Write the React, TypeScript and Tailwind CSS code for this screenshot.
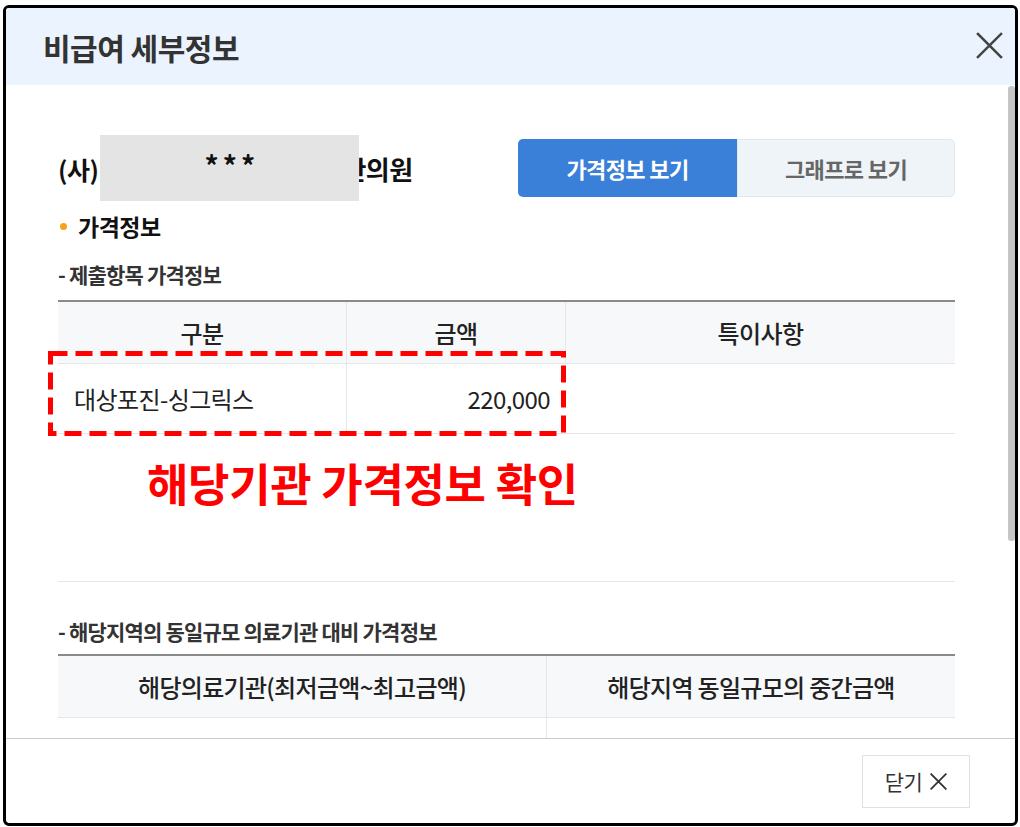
import React from "react";

const font = { fontFamily: '"Noto Sans CJK KR", "Noto Sans", sans-serif' };

function CloseIcon({ size, stroke, color }: { size: number; stroke: number; color: string }) {
  return (
    <svg width={size} height={size} viewBox="0 0 28 28" fill="none">
      <path d="M2 2 L26 26 M26 2 L2 26" stroke={color} strokeWidth={stroke} strokeLinecap="square" />
    </svg>
  );
}

export default function App() {
  return (
    <div className="relative w-[1020px] h-[827px] bg-white overflow-hidden" style={font}>
      <div className="absolute left-[3px] top-[5px] w-[1015px] h-[821px] border-[3px] border-black rounded-[6px] bg-white flex flex-col overflow-hidden">
        {/* Header */}
        <div className="h-[77px] shrink-0 bg-[#ebf3fe] flex items-center justify-between pl-[37px] pr-[12px]">
          <h1 className="text-[30px] leading-none font-bold text-[#333] tracking-[-0.5px]">비급여 세부정보</h1>
          <button className="w-[28px] h-[28px] flex items-center justify-center mt-[-2px]">
            <CloseIcon size={27} stroke={2.6} color="#444" />
          </button>
        </div>

        {/* Body */}
        <div className="relative flex-1 overflow-hidden">
          <div className="absolute right-[0px] top-[1px] w-[7px] h-[455px] rounded-[3px] bg-[#c6c6c6]" />
          <div className="pl-[52px] pr-[60px] pt-[50px]">
            {/* name row */}
            <div className="flex items-center justify-between h-[66px]">
              <div className="flex items-center">
                <span className="text-[25px] leading-none font-bold text-[#111] tracking-[-0.5px] mt-[2px]">(사)</span>
                <div className="relative z-10 ml-[2px] w-[259px] h-[66px] bg-[#e4e4e4] flex items-start justify-center pt-[16px]">
                  <span className="text-[28px] leading-none font-bold text-[#111] tracking-[4px] pl-[4px]">***</span>
                </div>
                <span className="ml-[-17px] text-[26px] leading-none font-bold text-[#111] tracking-[-0.5px] mt-[2px]">한의원</span>
              </div>
              <div className="flex w-[437px] h-[58px]">
                <button className="w-[219px] h-full bg-[#3a80d8] rounded-l-[5px] text-white text-[22px] leading-none font-bold tracking-[-0.6px]">
                  가격정보 보기
                </button>
                <button className="w-[218px] h-full bg-[#eff4f8] border border-[#e2e8ec] rounded-r-[5px] text-[#666] text-[22px] leading-none font-bold tracking-[-0.6px]">
                  그래프로 보기
                </button>
              </div>
            </div>

            {/* bullet */}
            <div className="mt-[12px] flex items-center h-[26px]">
              <span className="w-[7px] h-[7px] rounded-full bg-[#f7a21b] ml-[2px] mr-[11px]" />
              <span className="text-[23px] leading-none font-bold text-[#111] tracking-[-0.5px]">가격정보</span>
            </div>

            <div className="mt-[23px] h-[24px] flex items-center text-[21px] leading-none font-bold text-[#333] tracking-[-0.8px]">- 제출항목 가격정보</div>

            {/* table 1 */}
            <div className="relative mt-[14px]">
              <div className="border-t-2 border-[#8a8a8a]">
                <div className="grid grid-cols-[289px_219px_1fr] h-[62px] bg-[#f7f8fa] border-b border-[#e6e6e6]">
                  <div className="flex items-center justify-center text-[24px] leading-none font-medium text-[#222] border-r border-[#e6e6e6] tracking-[-0.6px]">구분</div>
                  <div className="flex items-center justify-center text-[24px] leading-none font-medium text-[#222] border-r border-[#e6e6e6] tracking-[-0.6px]">금액</div>
                  <div className="flex items-center justify-center text-[24px] leading-none font-medium text-[#222] tracking-[-0.6px]">특이사항</div>
                </div>
                <div className="grid grid-cols-[289px_219px_1fr] h-[70px] border-b border-[#e6e6e6]">
                  <div className="flex items-center pl-[16px] text-[24px] leading-none text-[#222] border-r border-[#e6e6e6] tracking-[-0.6px]">대상포진-싱그릭스</div>
                  <div className="flex items-center justify-end pr-[16px] text-[24px] leading-none text-[#222] tracking-[-0.6px]">220,000</div>
                  <div />
                </div>
              </div>
              <svg className="absolute left-[-10px] top-[51px]" width="518" height="85" viewBox="0 0 518 85" fill="none">
                <rect x="2.5" y="2.5" width="513" height="80" stroke="#ff0000" strokeWidth="5" strokeDasharray="17 8" />
              </svg>
            </div>

            <div className="mt-[25px] ml-[89px] h-[46px] flex items-center text-[45px] leading-none font-bold text-[#ff0000] tracking-[-0.3px]">
              해당기관 가격정보 확인
            </div>

            <div className="mt-[76px] h-px bg-[#e6e6e6]" />

            <div className="mt-[37px] h-[24px] flex items-center text-[21px] leading-none font-bold text-[#333] tracking-[-0.8px]">
              - 해당지역의 동일규모 의료기관 대비 가격정보
            </div>

            {/* table 2 */}
            <div className="mt-[11px] border-t-2 border-[#8a8a8a]">
              <div className="grid grid-cols-[489px_1fr] h-[62px] bg-[#f7f8fa] border-b border-[#e6e6e6]">
                <div className="flex items-center justify-center text-[24px] leading-none font-medium text-[#222] border-r border-[#e6e6e6] tracking-[-0.7px]">해당의료기관(최저금액~최고금액)</div>
                <div className="flex items-center justify-center text-[24px] leading-none font-medium text-[#222] tracking-[-0.7px]">해당지역 동일규모의 중간금액</div>
              </div>
              <div className="grid grid-cols-[489px_1fr] h-[70px]">
                <div className="border-r border-[#e6e6e6]" />
                <div />
              </div>
            </div>
          </div>
        </div>

        {/* Footer */}
        <div className="h-[85px] shrink-0 border-t border-[#cccccc] flex items-start justify-end pt-[16px] pr-[45px]">
          <button className="w-[108px] h-[53px] border border-[#e0e0e0] bg-white flex items-center justify-center gap-[8px] text-[21px] leading-none text-[#333]">
            <span className="tracking-[-0.5px]">닫기</span>
            <CloseIcon size={17} stroke={3} color="#333" />
          </button>
        </div>
      </div>
    </div>
  );
}
